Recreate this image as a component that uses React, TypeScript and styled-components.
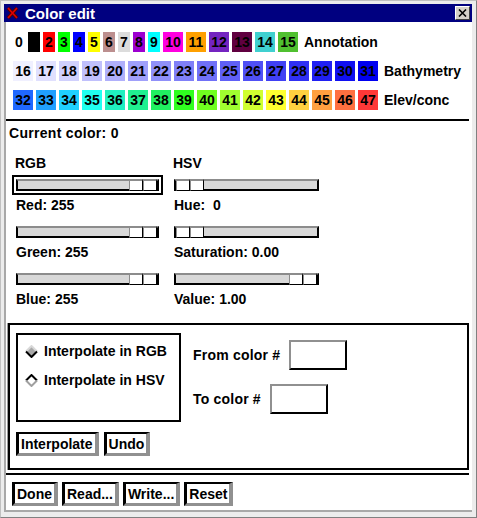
import React from 'react'
import styled, { createGlobalStyle } from 'styled-components'

const GlobalStyle = createGlobalStyle`
  html, body {
    margin: 0;
    padding: 0;
    background: #c0c0c0;
  }
  body {
    font-family: "Liberation Sans", Arial, sans-serif;
    font-size: 14px;
    font-weight: bold;
    color: #000;
  }
`

const Window = styled.div`
  width: 477px;
  height: 518px;
  box-sizing: border-box;
  display: flex;
  flex-direction: column;
  background: #ececec;
  border-style: solid;
  border-width: 1px 1px 1px 1px;
  border-color: #c0c0c0 #808080 #808080 #c0c0c0;
  padding: 3px 4px 5px 3px;
`

const TitleBar = styled.div`
  height: 18px;
  flex-shrink: 0;
  display: flex;
  align-items: center;
  background: #000080;
  padding: 0 2px;
`

const Title = styled.span`
  color: #fff;
  font-size: 15px;
  margin-left: 6px;
  flex: 1;
`

const CloseButton = styled.div`
  width: 15px;
  height: 14px;
  box-sizing: border-box;
  display: flex;
  align-items: center;
  justify-content: center;
  background: #d4d0c8;
  border-style: solid;
  border-width: 1px;
  border-color: #fff #404040 #404040 #fff;
`

const Body = styled.div`
  flex: 1;
  display: flex;
  flex-direction: column;
  background: #fff;
  border-left: 2px solid #a8a8a8;
  border-bottom: 2px solid #a8a8a8;
  padding-top: 10px;
`

const Palette = styled.div`
  display: flex;
  flex-direction: column;
  gap: 9px;
  margin-left: 7px;
`

const SwatchRow = styled.div`
  display: flex;
  align-items: center;
  gap: 3px;
  height: 20px;
`

const Swatch = styled.div<{ $bg: string; $wide: boolean }>`
  width: ${(p) => (p.$wide ? 20 : 12)}px;
  height: 20px;
  line-height: 21px;
  text-align: center;
  background: ${(p) => p.$bg};
  color: #000;
`

const RowLabel = styled.span`
  margin-left: 3px;
`

const Separator = styled.div<{ $top: number }>`
  height: 2px;
  background: #000;
  margin: ${(p) => p.$top}px 3px 0 0;
`

const CurrentColor = styled.div`
  line-height: 16px;
  margin: 4px 0 0 3px;
  letter-spacing: 0.3px;
`

const SliderGrid = styled.div`
  display: grid;
  grid-template-columns: 151px 153px;
  column-gap: 7px;
  margin: 14px 0 0 6px;
`

const SliderColumn = styled.div`
  display: flex;
  flex-direction: column;
`

const ColumnHeading = styled.div`
  line-height: 16px;
  margin: 0 0 4px 3px;
`

const SliderGroup = styled.div`
  display: flex;
  flex-direction: column;
  margin-bottom: 9px;
`

const SliderFrame = styled.div<{ $focused?: boolean }>`
  height: 20px;
  box-sizing: border-box;
  padding: 2px;
  border: 2px solid ${(p) => (p.$focused ? '#000' : 'transparent')};
`

const Trough = styled.div<{ $align: 'flex-start' | 'flex-end' }>`
  height: 12px;
  box-sizing: border-box;
  display: flex;
  justify-content: ${(p) => p.$align};
  background: #d8d8d8;
  border-style: solid;
  border-width: 2px 2px 2px 2px;
  border-color: #8c8c8c #000 #000 #000;
`

const Thumb = styled.div`
  width: 28px;
  display: flex;
  margin: -2px 0;
`

const ThumbHalf = styled.div`
  flex: 1;
  background: #fff;
  border-style: solid;
  border-width: 2px 1px 1px 1px;
  border-color: #8c8c8c #000 #000 #8c8c8c;
`

const ValueLabel = styled.div`
  line-height: 16px;
  margin: 2px 0 0 4px;
  white-space: pre;
`

const InterpFrame = styled.div`
  margin: 7px 3px 0 2px;
  box-sizing: border-box;
  border: 2px solid #000;
  box-shadow: -1px 0 0 #9a9a9a;
  padding: 8px 6px 12px;
`

const InterpTop = styled.div`
  display: flex;
  gap: 12px;
`

const RadioBox = styled.div`
  width: 165px;
  height: 89px;
  box-sizing: border-box;
  border: 2px solid #000;
  padding: 8px 0 0 7px;
  display: flex;
  flex-direction: column;
  gap: 13px;
`

const RadioRow = styled.div`
  display: flex;
  align-items: center;
  gap: 6px;
  line-height: 16px;
`

const FieldColumn = styled.div`
  display: flex;
  flex-direction: column;
  gap: 14px;
  padding-top: 7px;
`

const FieldRow = styled.div`
  display: flex;
  align-items: center;
  gap: 9px;
  letter-spacing: 0.2px;
`

const TextBox = styled.div`
  width: 58px;
  height: 30px;
  box-sizing: border-box;
  background: #fff;
  border-style: solid;
  border-width: 2px;
  border-color: #909090 #000 #000 #909090;
`

const ButtonRow = styled.div<{ $gap: number; $top: number; $left: number }>`
  display: flex;
  gap: ${(p) => p.$gap}px;
  margin: ${(p) => p.$top}px 0 0 ${(p) => p.$left}px;
`

const PushButton = styled.button`
  font: inherit;
  color: #000;
  height: 24px;
  padding: 0 2px;
  background: #fff;
  border-style: solid;
  border-width: 2px 4px 3px 3px;
  border-color: #000 #909090 #909090 #000;
  line-height: 18px;
`

const swatch = (n: number, bg: string) => ({ n, bg })

const annotation = [
  swatch(0, '#ffffff'), swatch(1, '#000000'), swatch(2, '#ff0000'), swatch(3, '#00ff00'),
  swatch(4, '#0000ff'), swatch(5, '#ffff00'), swatch(6, '#bc8f8f'), swatch(7, '#dcdcdc'),
  swatch(8, '#9c00d0'), swatch(9, '#00ffff'), swatch(10, '#ff00e0'), swatch(11, '#ffa000'),
  swatch(12, '#7424c0'), swatch(13, '#600040'), swatch(14, '#40d0d0'), swatch(15, '#50c030'),
]

const bathymetry = Array.from({ length: 16 }, (_, i) => {
  const v = 240 - i * 16
  return swatch(16 + i, `rgb(${v}, ${v}, ${255 - i})`)
})

const elevation = [
  '#2068ff', '#20a0ff', '#20d0ff', '#20fff0', '#20f0c0', '#20f090', '#20f060', '#30ff20',
  '#70ff20', '#a0ff30', '#d0ff30', '#ffff30', '#ffd040', '#ffa040', '#ff7040', '#ff3838',
].map((bg, i) => swatch(32 + i, bg))

const rows = [
  { label: 'Annotation', items: annotation },
  { label: 'Bathymetry', items: bathymetry },
  { label: 'Elev/conc', items: elevation },
]

const sliders = {
  rgb: [
    { label: 'Red: 255', align: 'flex-end' as const, focused: true },
    { label: 'Green: 255', align: 'flex-end' as const },
    { label: 'Blue: 255', align: 'flex-end' as const },
  ],
  hsv: [
    { label: 'Hue:  0', align: 'flex-start' as const },
    { label: 'Saturation: 0.00', align: 'flex-start' as const },
    { label: 'Value: 1.00', align: 'flex-end' as const },
  ],
}

function WindowIcon() {
  return (
    <svg width="13" height="12" viewBox="0 0 13 12">
      <path d="M2 1 L11 11 M11 1 L2 11" stroke="#500000" strokeWidth="3.4" />
      <path d="M2 1 L11 11 M11 1 L2 11" stroke="#e00000" strokeWidth="1.6" />
    </svg>
  )
}

function CloseGlyph() {
  return (
    <svg width="9" height="8" viewBox="0 0 9 8">
      <path d="M1 0.5 L8 7.5 M8 0.5 L1 7.5" stroke="#000" strokeWidth="1.6" />
    </svg>
  )
}

function Diamond({ on }: { on?: boolean }) {
  return (
    <svg width="13" height="13" viewBox="0 0 13 13">
      <polygon points="6.5,1 12,6.5 6.5,12 1,6.5" fill={on ? '#a8a8a8' : '#fff'} />
      <polyline points="1,6.5 6.5,1 12,6.5" fill="none" stroke={on ? '#d8d8d8' : '#000'} strokeWidth="2" />
      <polyline points="1,6.5 6.5,12 12,6.5" fill="none" stroke={on ? '#000' : '#a0a0a0'} strokeWidth="2" />
    </svg>
  )
}

function SliderStack({ heading, items }: { heading: string; items: typeof sliders.rgb }) {
  return (
    <SliderColumn>
      <ColumnHeading>{heading}</ColumnHeading>
      {items.map((s) => (
        <SliderGroup key={s.label}>
          <SliderFrame $focused={'focused' in s && s.focused}>
            <Trough $align={s.align}>
              <Thumb>
                <ThumbHalf />
                <ThumbHalf />
              </Thumb>
            </Trough>
          </SliderFrame>
          <ValueLabel>{s.label}</ValueLabel>
        </SliderGroup>
      ))}
    </SliderColumn>
  )
}

export default function App() {
  return (
    <>
      <GlobalStyle />
      <Window>
        <TitleBar>
          <WindowIcon />
          <Title>Color edit</Title>
          <CloseButton>
            <CloseGlyph />
          </CloseButton>
        </TitleBar>
        <Body>
          <Palette>
            {rows.map((row) => (
              <SwatchRow key={row.label}>
                {row.items.map((s) => (
                  <Swatch key={s.n} $bg={s.bg} $wide={s.n >= 10}>{s.n}</Swatch>
                ))}
                <RowLabel>{row.label}</RowLabel>
              </SwatchRow>
            ))}
          </Palette>
          <Separator $top={9} />
          <CurrentColor>Current color: 0</CurrentColor>
          <SliderGrid>
            <SliderStack heading="RGB" items={sliders.rgb} />
            <SliderStack heading="HSV" items={sliders.hsv} />
          </SliderGrid>
          <InterpFrame>
            <InterpTop>
              <RadioBox>
                <RadioRow>
                  <Diamond on />
                  Interpolate in RGB
                </RadioRow>
                <RadioRow>
                  <Diamond />
                  Interpolate in HSV
                </RadioRow>
              </RadioBox>
              <FieldColumn>
                <FieldRow>
                  From color #
                  <TextBox />
                </FieldRow>
                <FieldRow>
                  To color #
                  <TextBox />
                </FieldRow>
              </FieldColumn>
            </InterpTop>
            <ButtonRow $gap={5} $top={10} $left={0}>
              <PushButton>Interpolate</PushButton>
              <PushButton>Undo</PushButton>
            </ButtonRow>
          </InterpFrame>
          <Separator $top={3} />
          <ButtonRow $gap={4} $top={7} $left={6}>
            <PushButton>Done</PushButton>
            <PushButton>Read...</PushButton>
            <PushButton>Write...</PushButton>
            <PushButton>Reset</PushButton>
          </ButtonRow>
        </Body>
      </Window>
    </>
  )
}
